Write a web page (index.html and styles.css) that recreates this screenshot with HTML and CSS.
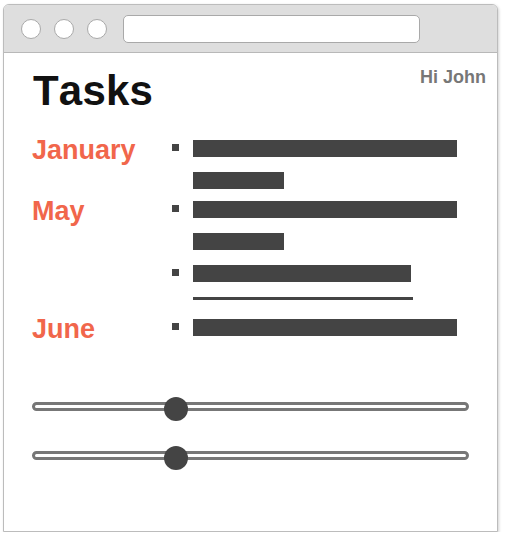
FILE: index.html
```html
<!DOCTYPE html>
<html>
<head>
<meta charset="utf-8">
<link rel="stylesheet" href="styles.css">
</head>
<body>
<div class="window">
  <div class="titlebar">
    <span class="dot"></span>
    <span class="dot"></span>
    <span class="dot"></span>
    <div class="address"></div>
  </div>
  <div class="content">
    <header class="header">
      <h1 class="title">Tasks</h1>
      <span class="greeting">Hi John</span>
    </header>
    <div class="months">
      <div class="month-row">
        <div class="month">January</div>
        <ul class="items">
          <li class="item">
            <span class="bullet"></span>
            <div class="lines">
              <span class="bar bar-full"></span>
              <span class="bar bar-short"></span>
            </div>
          </li>
        </ul>
      </div>
      <div class="month-row">
        <div class="month">May</div>
        <ul class="items">
          <li class="item">
            <span class="bullet"></span>
            <div class="lines">
              <span class="bar bar-full"></span>
              <span class="bar bar-short"></span>
            </div>
          </li>
          <li class="item">
            <span class="bullet"></span>
            <div class="lines">
              <span class="bar bar-mid"></span>
              <span class="rule"></span>
            </div>
          </li>
        </ul>
      </div>
      <div class="month-row">
        <div class="month">June</div>
        <ul class="items">
          <li class="item">
            <span class="bullet"></span>
            <div class="lines">
              <span class="bar bar-full"></span>
            </div>
          </li>
        </ul>
      </div>
    </div>
    <div class="sliders">
      <div class="track"><span class="thumb"></span></div>
      <div class="track"><span class="thumb"></span></div>
    </div>
  </div>
</div>
</body>
</html>
```
FILE: styles.css
```css
* { box-sizing: border-box; }
html, body { margin: 0; padding: 0; background: #fff; }
body { font-family: "Liberation Sans", Arial, sans-serif; }

.window {
  margin: 4px 0 0 3px;
  width: 495px;
  height: 528px;
  border: 1px solid #bcbcbc;
  border-radius: 6px 6px 0 0;
  box-shadow: 1px 1px 3px rgba(0,0,0,0.18);
  display: flex;
  flex-direction: column;
  overflow: hidden;
  background: #fff;
}

.titlebar {
  height: 48px;
  flex: none;
  background: #dedede;
  border-bottom: 1px solid #b8b8b8;
  display: flex;
  align-items: center;
  padding-left: 17px;
  gap: 13px;
}
.dot {
  width: 20px;
  height: 20px;
  border-radius: 50%;
  background: #fff;
  border: 1px solid #a9a9a9;
  flex: none;
}
.address {
  margin-left: 3px;
  width: 297px;
  height: 28px;
  background: #fff;
  border: 1px solid #a9a9a9;
  border-radius: 5px;
}

.content {
  flex: 1;
  padding: 0 28px;
}

.header {
  display: flex;
  justify-content: space-between;
  align-items: flex-start;
  margin-right: -17px;
}
.title {
  margin: 17px 0 0 1px;
  font-size: 42px;
  line-height: 42px;
  font-weight: bold;
  color: #111;
  font-kerning: none;
  letter-spacing: 0.2px;
}
.greeting {
  margin-top: 15px;
  font-size: 18px;
  line-height: 18px;
  font-weight: bold;
  color: #777;
}

.months {
  margin-top: 24px;
  display: flex;
  flex-direction: column;
  gap: 7.5px;
}
.month-row {
  display: flex;
  align-items: flex-start;
}
.month {
  width: 140px;
  flex: none;
  padding-top: 1px;
  font-size: 27px;
  line-height: 27px;
  font-weight: bold;
  color: #f1664b;
}
.items {
  list-style: none;
  margin: 0;
  padding: 4px 0 0;
  display: flex;
  flex-direction: column;
  gap: 15px;
}
.item {
  display: flex;
  align-items: flex-start;
  gap: 14px;
}
.bullet {
  width: 7px;
  height: 7px;
  margin-top: 4px;
  background: #444;
  flex: none;
}
.lines {
  display: flex;
  flex-direction: column;
  gap: 15px;
}
.bar {
  display: block;
  height: 17px;
  background: #444;
}
.bar-full { width: 264px; }
.bar-short { width: 91px; }
.bar-mid { width: 218px; }
.rule {
  display: block;
  width: 220px;
  height: 3px;
  background: #444;
  margin-bottom: 8px;
}

.sliders {
  margin-top: 59px;
  display: flex;
  flex-direction: column;
  gap: 40px;
}
.track {
  position: relative;
  height: 9px;
  border: 3px solid #777;
  border-radius: 5px;
  background: #fff;
}
.thumb {
  position: absolute;
  left: 129px;
  top: -8px;
  width: 24px;
  height: 24px;
  border-radius: 50%;
  background: #444;
}
```
